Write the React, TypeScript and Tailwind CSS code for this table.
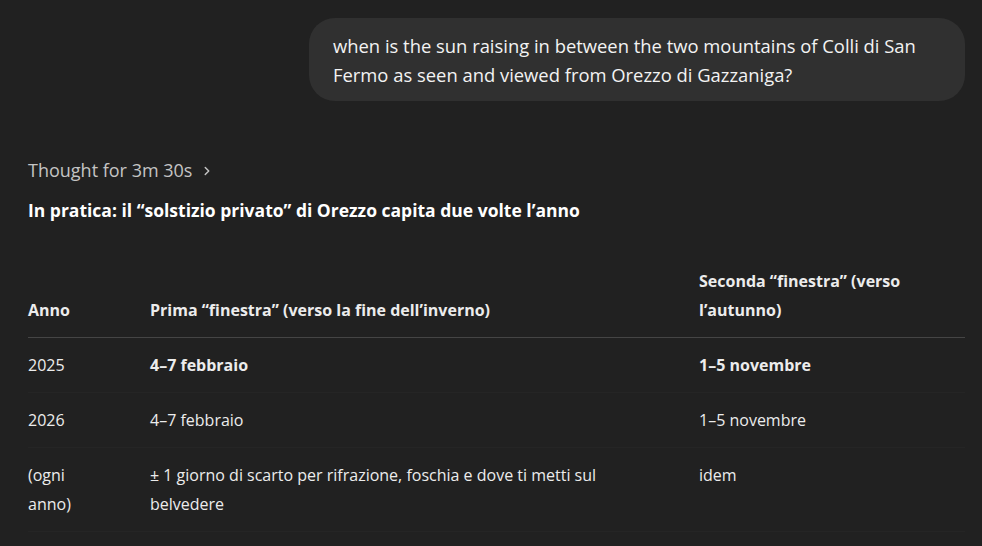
import React from "react";

const rows = [
  { a: "2025", b: "4–7 febbraio", c: "1–5 novembre", bold: true },
  { a: "2026", b: "4–7 febbraio", c: "1–5 novembre", bold: false },
  {
    a: "(ogni anno)",
    b: "± 1 giorno di scarto per rifrazione, foschia e dove ti metti sul belvedere",
    c: "idem",
    bold: false,
  },
];

export default function App() {
  return (
    <div
      className="w-[982px] h-[546px] overflow-hidden bg-[#212121] text-[#ececec] text-[16px] leading-[29px]"
      style={{ fontFamily: "'Open Sans', 'Noto Sans', sans-serif" }}
    >
      <div className="flex justify-end pt-[18px] pr-[17px]">
        <div className="w-[656px] rounded-[26px] bg-[#303030] pl-[24px] pr-[30px] pt-[13px] pb-[12px] text-[18.4px] leading-[29px] text-[#f3f3f3]">
          when is the sun raising in between the two mountains of Colli di San Fermo as seen and viewed from Orezzo di Gazzaniga?
        </div>
      </div>

      <div className="pl-[28px] pr-[17px] pt-[55px]">
        <div className="flex items-center gap-[8px] text-[18px] text-[#c4c4c4]">
          <span>Thought for 3m 30s</span>
          <svg width="14" height="14" viewBox="0 0 24 24" fill="none" stroke="currentColor" strokeWidth="2.5" strokeLinecap="round" strokeLinejoin="round">
            <path d="M9 6l6 6-6 6" />
          </svg>
        </div>
        <div className="mt-[11px] text-[17.5px] font-bold text-white">
          In pratica: il “solstizio privato” di Orezzo capita due volte l’anno
        </div>

        <table className="mt-[29px] w-[937px] border-collapse text-left">
          <thead>
            <tr className="border-b border-[#454545]">
              <th className="w-[122px] pb-[12px] pt-[13px] align-bottom font-bold">Anno</th>
              <th className="w-[549px] pb-[12px] pt-[13px] pr-[16px] align-bottom font-bold">
                Prima “finestra” (verso la fine dell’inverno)
              </th>
              <th className="pb-[12px] pt-[13px] pr-[60px] align-bottom font-bold">
                Seconda “finestra” (verso l’autunno)
              </th>
            </tr>
          </thead>
          <tbody>
            {rows.map((r, i) => (
              <tr key={i} className="border-b border-[#252525]">
                <td className="py-[12.5px] pr-[60px] align-top">{r.a}</td>
                <td className={"py-[12.5px] pr-[60px] align-top " + (r.bold ? "font-bold" : "")}>{r.b}</td>
                <td className={"py-[12.5px] align-top " + (r.bold ? "font-bold" : "")}>{r.c}</td>
              </tr>
            ))}
          </tbody>
        </table>
      </div>
    </div>
  );
}
